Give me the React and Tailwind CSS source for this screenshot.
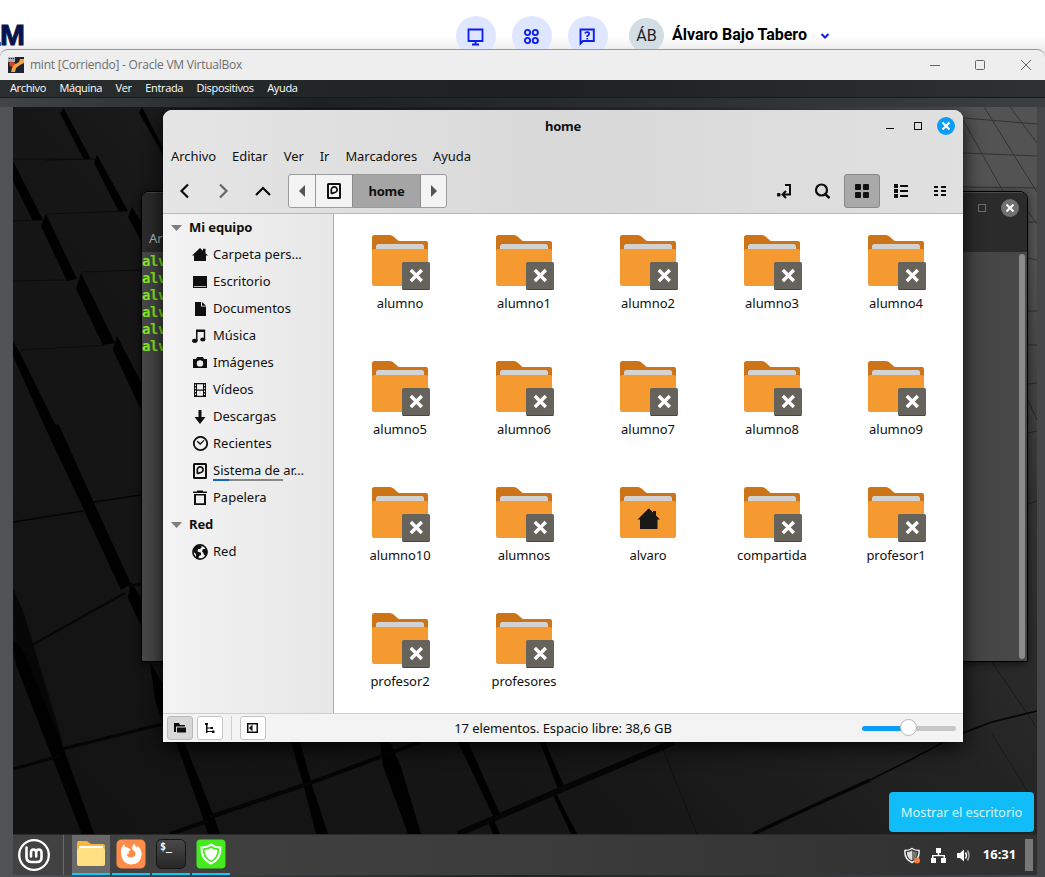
import React from "react";

const INK = "#0d0d0d";

function Wallpaper() {
  return (
    <svg className="absolute inset-0 h-full w-full" viewBox="13 107 1024 727" preserveAspectRatio="none">
      <defs>
        <linearGradient id="wall" x1="0" y1="0.8" x2="1" y2="0.2">
          <stop offset="0" stopColor="#131313" />
          <stop offset="0.35" stopColor="#161616" />
          <stop offset="0.65" stopColor="#232323" />
          <stop offset="0.85" stopColor="#333333" />
          <stop offset="1" stopColor="#535353" />
        </linearGradient>
      </defs>
      <rect x="13" y="107" width="1024" height="727" fill="url(#wall)" />
      <g fill="#010101">
        <path d="M63 107 L91 159 L84 160 L60 113 L64 108Z" />
        <path d="M142 107 L164 150 L164 156 L139 113Z" />
        <path d="M13 161 L43 220 L33 221 L13 181Z" />
        <path d="M97 155 L128 211 L119 212 L94 163Z" />
        <path d="M46 214 L77 279 L67 281 L41 226Z" />
        <path d="M132 207 L142 224 L142 242 L128 217Z" />
        <path d="M81 273 L115 343 L103 345 L76 289Z" />
        <path d="M117 336 L142 384 L142 412 L113 350Z" />
        <path d="M13 341 L20 353 L55 424 L59 425 L94 503 L131 584 L121 590 L84 510 L44 425 L13 356Z" />
        <path d="M131 582 L142 600 L142 628 L128 598Z" />
        <path d="M13 588 L24 614 L60 735 L63 748 L95 834 L84 834 L52 748 L13 655Z" opacity=".25" />
        <path d="M13 588 L24 615 L62 742 L94 834 L81 834 L54 750 L17 660Z" opacity=".3" />
        <path d="M13 588 L23 610 L62 738 L55 752 L13 656Z" opacity=".25" />
        <path d="M13 641 L22 648 L62 745 L94 834 L82 834 L52 757 L16 665Z" />
        <path d="M150 662 L163 684 L163 724 L155 700Z" />
        <path d="M176 742 L184 742 L213 814 L220 834 L208 834 L202 815Z" />
        <path d="M291 742 L300 742 L311 782 L328 834 L316 834 L304 787Z" />
        <path d="M380 742 L390 742 L401 767 L421 834 L408 834 L383 766Z" />
        <path d="M458 742 L468 742 L500 814 L493 816Z" />
        <path d="M540 742 L545 742 L564 786 L558 789Z" />
        <path d="M556 793 L577 834 L571 834 L554 797Z" />
        <path d="M488 821 L494 820 L500 834 L493 834Z" />
      </g>
      <g stroke="#050505" fill="none">
        <path d="M13 522 L83 511 M94 502 L141 495" strokeWidth="1.5" />
        <path d="M45 160 L95 159 M13 159 L84 159 M13 221 L44 220 M46 214 L126 211 M13 281 L68 280 M82 272 L142 270 M21 350 L108 345" stroke="#0b0b0b" />
        <path d="M23 650 L125 593 M128 586 L142 584" strokeWidth="2.5" stroke="#070707" />
        <path d="M62 749 L163 724 M13 769 L60 756" strokeWidth="3" />
        <path d="M210 817 L310 783 L385 755 L420 742 M170 834 L208 821" strokeWidth="4" />
        <path d="M458 834 L560 790 L674 742" strokeWidth="6" />
        <path d="M753 834 L800 812 L870 780 L910 760 L955 736 L992 722 L1037 711" strokeWidth="1.500" />
        <path d="M753 834 L815 805 L870 780" strokeWidth="3.500" />
      </g>
      <g stroke="#000" opacity=".38" fill="none">
        <path d="M963 118 L1037 124 M963 153 L1037 156 M963 187 L1037 188 M1028 222 H1037 M1028 258 L1037 260 M1028 311 H1037 M1028 345 H1037 M1028 384 L1037 383 M1028 433 L1037 431 M1028 504 L1037 501" />
        <path d="M963 120 L1003 191 M984 107 L1037 192 M1010 107 L1037 143 M992 662 L1037 728 M992 734 L1030 795 M660 742 L697 834 M1027 210 L1037 224 M1028 400 L1037 420" />
      </g>
    </svg>
  );
}

const glyphs = {
  home: <path fill="currentColor" d="M8 1 L16 8.500 H14 V14 H2 V8.500 H0Z M11 1.800 H13.500 V6.500 L11 4Z" />,
  desk: (
    <path fill="currentColor" fillRule="evenodd" d="M1 2 H15 V14 H1Z M2 12.200 V13 H14 V12.200Z" />
  ),
  doc: <path fill="currentColor" fillRule="evenodd" d="M3 1 H9 V5.500 H14 V15 H3Z M10 1 L14 4.800 H10Z" />,
  music: (
    <g fill="currentColor">
      <path d="M4 1.500 H13.200 V11.500 H11.800 V4 H5.500 V13 H4Z" />
      <ellipse cx="2.800" cy="12.800" rx="2.800" ry="2.100" />
      <ellipse cx="10.800" cy="11.500" rx="2.600" ry="2.100" />
    </g>
  ),
  camera: (
    <path fill="currentColor" fillRule="evenodd" d="M5 2 H11 L12 4 H15 V13 H1 V4 H4Z M8 5.200 A3.200 3.200 0 1 0 8 11.600 A3.200 3.200 0 1 0 8 5.200Z" />
  ),
  film: (
    <path fill="currentColor" fillRule="evenodd" d="M2 1 H14 V15 H2Z M5 2.200 V7.400 H11 V2.200Z M5 8.700 V13.800 H11 V8.700Z M3 2.400 V4 H4 V2.400Z M3 5.400 V7 H4 V5.400Z M3 8.400 V10 H4 V8.400Z M3 11.400 V13 H4 V11.400Z M12 2.400 V4 H13 V2.400Z M12 5.400 V7 H13 V5.400Z M12 8.400 V10 H13 V8.400Z M12 11.400 V13 H13 V11.400Z" />
  ),
  down: <path fill="currentColor" d="M6.500 1 H9.500 V8 H13.500 L8 15 L2.500 8 H6.500Z" />,
  clock: (
    <g fill="none" stroke="currentColor">
      <circle cx="8.500" cy="7.500" r="6.700" strokeWidth="1.800" />
      <path d="M5.200 5.200 L8.200 8 L12 4.400" strokeWidth="1.300" />
    </g>
  ),
  disk: (
    <g fill="none" stroke="currentColor">
      <rect x="2" y="1" width="12" height="14" rx="0.500" strokeWidth="2" />
      <path d="M5.300 10.800 V6.800 A2.900 2.900 0 1 1 8.200 9.600 L5.300 10.800" strokeWidth="1.700" />
    </g>
  ),
  trash: <path fill="currentColor" fillRule="evenodd" d="M5 0.500 H11 V1.500 H15 V3 H1 V1.500 H5Z M2 4 H14 V15 H2Z M4 5.500 V13.200 H12 V5.500Z" />,
  globe: (
    <g>
      <circle cx="8" cy="8" r="7.100" fill="none" stroke="currentColor" strokeWidth="1.600" />
      <path fill="currentColor" d="M1 6 L4 2 L8 1 L10 3 L8 5 L6 5 L5.500 7.500 L9 8.800 L9 11 L7 12 L6.500 15 L4 14 L4 10 L1.500 8Z M11 5 L14.500 5 L15.500 8 L14 11.500 L12 11 L11.500 9 L10 7.500Z" />
    </g>
  ),
};

function Glyph({ name }) {
  return (
    <svg viewBox="0 0 16 16" className="h-4 w-4 shrink-0">
      {glyphs[name]}
    </svg>
  );
}

function Folder({ home }) {
  return (
    <svg viewBox="0 0 64 56" className="h-14 w-16">
      <rect x="4" y="10" width="56" height="41" rx="2" fill="#a9a9a9" />
      <path d="M4 17 V2.500 Q4 0 6.500 0 H22 Q24 0 25.500 1.500 L30 5.500 Q30.700 6 32 6 H58 Q60 6 60 8 V17Z" fill="#cd7318" />
      <path d="M8 15 V11.500 Q8 9 10.500 9 H53.500 Q56 9 56 11.500 V15Z" fill="#d2d2d2" />
      <path d="M4 16 Q4 14 6 14 H58 Q60 14 60 16 V48 Q60 50 58 50 H6 Q4 50 4 48Z" fill="#f59a31" />
      {home ? (
        <path d="M33 21.500 L44 32.500 H41.500 V42 H24 V32.500 H21.500 L31.500 22.500 Q32.500 21.500 33 21.500 M37 24 H40 V29 L37 26Z" fill="#191919" />
      ) : (
        <g>
          <rect x="34" y="27" width="28" height="28" rx="1.500" fill="#65635c" />
          <path d="M35 54.500 H61" stroke="#474540" />
          <path d="M42.800 35 L53.800 46 M53.800 35 L42.800 46" stroke="#fff" strokeWidth="3.400" />
        </g>
      )}
    </svg>
  );
}

const places = [
  ["home", "Carpeta pers…"],
  ["desk", "Escritorio"],
  ["doc", "Documentos"],
  ["music", "Música"],
  ["camera", "Imágenes"],
  ["film", "Vídeos"],
  ["down", "Descargas"],
  ["clock", "Recientes"],
  ["disk", "Sistema de ar…"],
  ["trash", "Papelera"],
];
const folders = [
  "alumno", "alumno1", "alumno2", "alumno3", "alumno4", "alumno5", "alumno6", "alumno7", "alumno8",
  "alumno9", "alumno10", "alumnos", "alvaro", "compartida", "profesor1", "profesor2", "profesores",
];

function SiteHeader() {
  return (
    <header className="flex h-[49px] w-full shrink-0 overflow-hidden bg-linear-to-b from-white from-75% to-[#eeeeee]">
      <div className="flex w-[456px] items-start pt-[21px]">
        <span className="mt-[21px] h-[4px] w-px bg-[#2a66bb]" />
        <span className="-ml-px font-['Liberation_Sans',sans-serif] text-[30px] leading-[28px] font-bold text-[#07124f] [-webkit-text-stroke:1px_#07124f]">M</span>
      </div>
      <div className="flex gap-4 pt-4">
        <div className="flex h-10 w-10 justify-center rounded-full bg-[#dfe6ff] pt-3">
          <svg className="h-[18px] w-[18px]" viewBox="0 0 18 18" fill="none" stroke="#0b1df0" strokeWidth="1.800">
            <path d="M1.500 1.500 H15.500 V13 H1.500Z M8.500 13 V16 M5 16.500 H12" />
          </svg>
        </div>
        <div className="flex h-10 w-10 justify-center rounded-full bg-[#dfe6ff] pt-3">
          <svg className="h-[18px] w-[18px]" viewBox="0 0 18 18" fill="none" stroke="#0b1df0" strokeWidth="1.900">
            <circle cx="4.500" cy="4.500" r="2.600" /><circle cx="12.300" cy="4.500" r="2.600" />
            <circle cx="4.500" cy="12.500" r="2.600" /><circle cx="12.300" cy="12.500" r="2.600" />
          </svg>
        </div>
        <div className="flex h-10 w-10 justify-center rounded-full bg-[#dfe6ff] pt-3">
          <svg className="h-[18px] w-[18px]" viewBox="0 0 18 18" fill="none" stroke="#0b1df0" strokeWidth="1.900">
            <path d="M1.500 15.500 V1.500 H14.800 V13 H4Z" />
            <path d="M6 5.600 Q6.500 4 8.300 4 Q10.300 4.200 10.200 5.800 Q10 7 8.300 8 V9 M8.300 9.900 V11.500" strokeWidth="1.700" />
          </svg>
        </div>
      </div>
      <div className="mt-[18px] ml-[21px] flex h-[35px] w-[35px] items-center justify-center rounded-full bg-[#d2dde5] font-[Roboto,sans-serif] text-[16px] text-[#222]">
        ÁB
      </div>
      <div className="ml-[8px] pt-[23px] font-[Roboto,sans-serif] text-[16px] leading-[24px] font-bold tracking-[-0.02px] whitespace-nowrap text-black">
        Álvaro Bajo Tabero
      </div>
      <svg className="mt-[33px] ml-[13px] h-[7px] w-[10px]" viewBox="0 0 10 7" fill="none" stroke="#0b1df0" strokeWidth="2">
        <path d="M1.500 1 L5 4.500 L8.500 1" />
      </svg>
    </header>
  );
}

function HostTitle() {
  return (
    <div className="flex h-[31px] shrink-0 items-center rounded-t-lg border-t border-[#999] bg-[#eeeeee] pl-2">
      <svg className="h-4 w-4" viewBox="0 0 16 16">
        <path fill="#1d2330" d="M0 0 H16 V16 H0Z" />
        <path fill="#a8b0bd" d="M0 0 H7 V5 H0Z" />
        <path fill="#222" d="M1 1 H2 V2 H1Z M3 1 H4 V2 H3Z M5 1 H6 V2 H5Z" />
        <path fill="#d4451c" d="M1 6 Q4 3 8 7 L7 11 L2 9Z" />
        <path fill="#f6a33c" d="M6 8 L11 5 L12 2 L16 2 V6 L12 8 L8 11 L7 15 H3 L4 11Z" />
      </svg>
      <span className="ml-[6px] font-['Open_Sans',sans-serif] text-[12px] tracking-[-0.24px] whitespace-nowrap text-[#6d6d6d]">
        mint [Corriendo] - Oracle VM VirtualBox
      </span>
      <svg className="mr-[14px] ml-auto h-[12px] w-[101px]" viewBox="0 0 101 12" fill="none" stroke="#666">
        <path d="M0 6.500 H10 M91 1 L101 11 M101 1 L91 11" />
        <rect x="45.500" y="1.500" width="9" height="9" rx="1" />
      </svg>
    </div>
  );
}

function Terminal() {
  return (
    <div className="absolute top-[84px] left-[128px] flex h-[471px] w-[887px] flex-col overflow-hidden rounded-t-lg border border-black bg-linear-to-r from-[#484848] via-[#333] to-[#484848] shadow-[0_2px_8px_#0008]">
      <div className="flex h-[60px] shrink-0 items-start justify-end gap-[15px] border-t border-[#4a4a4a] bg-[#2b2b2b] pt-[6px] pr-[8px]">
        <span className="mt-[30px] mr-auto ml-[7px] font-['Noto_Sans',sans-serif] text-[13px] leading-[18px] text-[#bbb]">Ar</span>
        <span className="mt-[5px] h-[8px] w-[8px] border border-[#707070]" />
        <span className="flex h-[18px] w-[18px] items-center justify-center rounded-full bg-[#707070]">
          <svg className="h-[8px] w-[8px]" viewBox="0 0 8 8"><path d="M0.500 0.500 L7.500 7.500 M7.500 0.500 L0.500 7.500" stroke="#fff" strokeWidth="2" /></svg>
        </span>
      </div>
      <div className="flex min-h-0 flex-1 justify-between pr-[2px]">
        <div className="pt-px font-['DejaVu_Sans_Mono',monospace] text-[14px] leading-[17px] font-bold tracking-[-0.4px] text-[#82f01e]">
          {[0, 1, 2, 3, 4, 5].map((n) => <div key={n}>alv</div>)}
        </div>
        <div className="mt-[2px] h-[405px] w-[6px] rounded-full bg-[#8b8b8b]" />
      </div>
    </div>
  );
}

function SideHead({ text }) {
  return (
    <div className="flex h-[27px] items-center gap-[7px] pl-[8px] font-bold">
      <svg className="h-[6px] w-[11px]" viewBox="0 0 11 6"><path d="M0 0 H11 L5.500 6Z" fill="#7d7d7d" /></svg>
      <span className="tracking-[-0.1px]">{text}</span>
    </div>
  );
}

function FileManager() {
  return (
    <div className="absolute top-[3px] left-[150px] flex h-[632px] w-[800px] flex-col overflow-hidden rounded-t-[9px] bg-white font-['Noto_Sans',sans-serif] text-[13px] text-[#101010] shadow-[0_5px_20px_#000d]">
      <div className="flex h-[104px] shrink-0 flex-col border-b border-[#b8b8b8] bg-linear-to-r from-[#e5e5e5] via-[#d9d9d9] to-[#e0e0e0]">
        <div className="grid h-[32px] grid-cols-3 items-center">
          <span />
          <span className="pt-[2px] text-center font-bold tracking-[-0.3px]">home</span>
          <div className="flex items-center justify-end pr-[8px]">
            <svg className="h-[18px] w-[73px]" viewBox="0 0 73 18" fill="none">
              <path d="M4 11.500 H12" stroke={INK} />
              <rect x="32.500" y="5.500" width="7" height="7" stroke={INK} />
              <circle cx="64" cy="9" r="9" fill="#0b9cf5" />
              <path d="M60.500 5.500 L67.500 12.500 M67.500 5.500 L60.500 12.500" stroke="#fff" strokeWidth="2" />
            </svg>
          </div>
        </div>
        <div className="flex h-[29px] items-center gap-[16px] pl-[8px] tracking-[-0.06px] whitespace-nowrap">
          {["Archivo", "Editar", "Ver", "Ir", "Marcadores", "Ayuda"].map((m) => <span key={m}>{m}</span>)}
        </div>
        <div className="flex h-[40px] items-center">
          <svg className="ml-[16px] h-[16px] w-[92px]" viewBox="0 0 92 16" fill="none" strokeWidth="2.200">
            <path d="M9 1.500 L2.500 8 L9 14.500" stroke={INK} />
            <path d="M41 1.500 L47.500 8 L41 14.500" stroke="#666" />
            <path d="M77 12 L84 5 L91 12" stroke={INK} />
          </svg>
          <div className="ml-[17px] flex h-[34px] w-[159px] overflow-hidden rounded-[3px] border border-[#9b9b9b] bg-[#f3f3f3]">
            <span className="flex w-[27px] items-center justify-center border-r border-[#9b9b9b]">
              <svg className="h-3 w-[6px]" viewBox="0 0 6 12"><path d="M6 0 V12 L0 6Z" fill="#555" /></svg>
            </span>
            <span className="flex w-[36px] items-center justify-center"><Glyph name="disk" /></span>
            <span className="flex w-[69px] items-center justify-center border-x border-[#8b8b8b] bg-[#a5a5a5] pt-px font-bold tracking-[-0.3px]">home</span>
            <span className="flex flex-1 items-center justify-center">
              <svg className="h-3 w-[6px]" viewBox="0 0 6 12"><path d="M0 0 V12 L6 6Z" fill="#555" /></svg>
            </span>
          </div>
          <svg className="ml-auto h-4 w-[53px]" viewBox="0 0 53 16" fill="none" stroke={INK}>
            <path d="M8 2 H13 V11.500 H6 M9 8 L5.500 11.500 L9 15" strokeWidth="2" />
            <rect x="0" y="10" width="3.500" height="3.500" rx="1" fill={INK} stroke="none" />
            <circle cx="44.500" cy="7" r="5.500" strokeWidth="2.200" />
            <path d="M48 11 L52.500 15" strokeWidth="2.500" />
          </svg>
          <div className="ml-[14px] flex h-[34px] w-[36px] items-center justify-center rounded-[3px] border border-[#888] bg-[#a9a9a9]">
            <div className="grid grid-cols-2 gap-[2px]">
              {[0, 1, 2, 3].map((n) => <span key={n} className="h-[6px] w-[6px] rounded-[1px] bg-[#111]" />)}
            </div>
          </div>
          <svg className="mr-[17px] ml-[14px] h-4 w-[52px]" viewBox="0 0 52 16" fill={INK}>
            <path d="M0 1 H4 V5 H0Z M0 6 H4 V10 H0Z M0 11 H4 V15 H0Z M6 2 H14 V4 H6Z M6 7 H14 V9 H6Z M6 12 H14 V14 H6Z" />
            <path d="M40 3 H44 V5 H40Z M40 7 H44 V9 H40Z M40 11 H44 V13 H40Z M47 3 H52 V5 H47Z M47 7 H52 V9 H47Z M47 11 H52 V13 H47Z" />
          </svg>
        </div>
      </div>
      <div className="flex h-[499px] shrink-0">
        <aside className="w-[171px] shrink-0 border-r border-[#a9a9a9] bg-linear-to-r from-[#f3f3f3] to-[#e8e7e7]">
          <SideHead text="Mi equipo" />
          {places.map(([icon, text]) => (
            <div key={text} className="flex h-[27px] items-center gap-[5px] pl-[29px] whitespace-nowrap">
              <Glyph name={icon} />
              <span className="relative leading-[19px]">
                {text}
                {icon === "disk" && <span className="absolute bottom-[-1px] left-0 h-[2px] w-[70px] bg-linear-to-r from-[#1565c8] from-23% to-[#888] to-23%" />}
              </span>
            </div>
          ))}
          <SideHead text="Red" />
          <div className="flex h-[27px] items-center gap-[5px] pl-[29px]">
            <Glyph name="globe" />
            <span>Red</span>
          </div>
        </aside>
        <main className="grid w-[624px] auto-rows-[126px] grid-cols-5 pt-[21px] pl-[4px]">
          {folders.map((f) => (
            <div key={f} className="flex flex-col items-center">
              <Folder home={f === "alvaro"} />
              <span className="mt-[3px] leading-[18px] tracking-[-0.05px]">{f}</span>
            </div>
          ))}
        </main>
      </div>
      <div className="flex h-[29px] shrink-0 items-center border-t border-[#cfcfcf] bg-[#f3f3f3] pl-[4px]">
        <span className="flex h-[24px] w-[26px] items-center justify-center rounded-[3px] border border-[#bbb] bg-[#d7d7d7]">
          <svg className="h-[10px] w-[12px]" viewBox="0 0 12 10"><path d="M0 0 H5 L6 2 H11 V3.500 H2 V9 H0Z M3 4.500 H12 V9.500 H3Z" fill={INK} /></svg>
        </span>
        <span className="ml-[4px] flex h-[24px] w-[26px] items-center justify-center rounded-[3px] border border-[#c5c5c5] bg-white">
          <svg className="h-[10px] w-[10px]" viewBox="0 0 10 10"><path d="M0 0 H3 V2 H0Z M1 2 H2.500 V10 H1Z M2 4.500 H6 V5.500 H2Z M2 8 H7 V9 H2Z M5.500 4 H8 V6 H5.500Z M7 7.500 H9.500 V10 H7Z" fill={INK} /></svg>
        </span>
        <span className="mx-[8px] h-[24px] w-px bg-[#cfcfcf]" />
        <span className="flex h-[24px] w-[26px] items-center justify-center rounded-[3px] border border-[#c5c5c5] bg-white">
          <svg className="h-[10px] w-[12px]" viewBox="0 0 12 10" fill={INK}><path fillRule="evenodd" d="M0 0 H11 V10 H0Z M1.500 1.500 V8.500 H9.500 V1.500Z" /><path d="M5.500 1.500 V8.500 L2 5Z" /></svg>
        </span>
        <span className="ml-[186px] w-[222px] pt-[2px] text-center tracking-[-0.07px] whitespace-nowrap">17 elementos. Espacio libre: 38,6 GB</span>
        <div className="relative mr-[7px] ml-auto flex h-[18px] w-[94px] items-center">
          <div className="h-[5px] w-full rounded-full bg-linear-to-r from-[#0b9cf5] from-50% to-[#c7c7c7] to-50%" />
          <span className="absolute top-0 left-[38px] h-[17px] w-[17px] rounded-full border border-[#b4b4b4] bg-white" />
        </div>
      </div>
    </div>
  );
}

function Task({ active, children }) {
  return (
    <div className={`flex w-[38px] items-center justify-center border-b-2 border-[#12c8fa] ${active ? "bg-[#696969]" : ""}`}>
      {children}
    </div>
  );
}

function Taskbar() {
  return (
    <div className="relative flex h-[41px] items-stretch border-t border-[#2a2a2a] bg-linear-to-r from-[#424242] via-[#3c3c3c] to-[#303030]">
      <div className="flex w-[51px] shrink-0 items-center border-r border-[#696969] pl-[5px]">
        <svg className="h-8 w-8" viewBox="0 0 32 32" fill="none" stroke="#fff" strokeLinecap="round">
          <circle cx="16" cy="16" r="14.800" strokeWidth="2.300" />
          <path d="M8.500 8.500 V18 Q8.500 23 13.500 23 H19 Q23.500 23 23.500 18.500 V13.500 Q23.500 10.500 20.800 10.500 Q18.200 10.500 18.200 13.500 V17.500 M18.200 13.500 Q18.200 10.500 15.500 10.500 Q13 10.500 13 13.500 V17.500" strokeWidth="2.600" />
        </svg>
      </div>
      <div className="ml-[8px] flex gap-[2px]">
        <Task active>
          <svg className="h-[30px] w-[30px]" viewBox="0 0 30 30">
            <path d="M1 10 V4 Q1 2 3 2 H11 L15 5 H27 Q29 5 29 7 V10Z" fill="#f8b63a" />
            <path d="M3 7 H27 V11 H3Z" fill="#fff" />
            <path d="M1 11 Q1 9 3 9 H27 Q29 9 29 11 V25 Q29 27 27 27 H3 Q1 27 1 25Z" fill="#ffe082" />
          </svg>
        </Task>
        <Task>
          <svg className="h-[30px] w-[30px]" viewBox="0 0 30 30">
            <rect x="0.500" y="0.500" width="29" height="29" rx="5" fill="#ff8d49" />
            <path fill="#fff" d="M5 13 Q5 8 8.500 5 Q8 7 9 8 Q11 7.500 13 9.500 L15 10.500 L12.500 12.500 L13 14.500 L10.500 15.500 Q12 19 16 18.500 Q20 17.500 19.500 14 Q19 12 17 11 Q14.500 8.500 18.500 4.500 Q19 7.500 21 8.500 L21.500 6.500 Q26 11 25.500 16 Q24.500 25 15.500 25.500 Q5.500 25 5 13Z" />
          </svg>
        </Task>
        <Task>
          <svg className="h-[30px] w-[30px]" viewBox="0 0 30 30">
            <defs><linearGradient id="term" x2="0" y2="1"><stop stopColor="#4a4a4a" /><stop offset="1" stopColor="#262626" /></linearGradient></defs>
            <rect x="0.500" y="0.500" width="29" height="29" rx="5" fill="url(#term)" stroke="#151515" />
            <text x="4" y="11" fontSize="10" fontWeight="bold" fill="#fff" fontFamily="DejaVu Sans Mono, monospace">$_</text>
          </svg>
        </Task>
        <Task>
          <svg className="h-[30px] w-[30px]" viewBox="0 0 30 30">
            <rect x="0.500" y="0.500" width="29" height="29" rx="4" fill="#44ea1d" />
            <path d="M15 5.500 Q19 8.500 24.500 8.500 Q25 20 15 24.500 Q5 20 5.500 8.500 Q11 8.500 15 5.500Z" fill="none" stroke="#fff" strokeWidth="2" />
            <path d="M15 9 Q18 11 21.500 11 Q21.500 18 15 21.500 Q8.500 18 8.500 11 Q12 11 15 9Z" fill="#fff" />
          </svg>
        </Task>
      </div>
      <div className="ml-auto flex items-center pr-[4px] text-white">
        <svg className="h-[17px] w-[68px]" viewBox="0 0 68 17">
          <path d="M8 1.500 Q11 3.500 15 3.500 Q16 12 8 15.500 Q0 12 1 3.500 Q5 3.500 8 1.500Z" fill="none" stroke="#f1f1f1" strokeWidth="1.500" />
          <path d="M8 3.500 Q10 5 13 5 Q13.500 11 8 13.500Z" fill="#777" /><path d="M8 3.500 Q6 5 3 5 Q2.500 11 8 13.500Z" fill="#ddd" />
          <circle cx="13" cy="13.500" r="3" fill="#f08043" />
          <path d="M32 1 H37 V6 H35.300 V8 H41 V11 H42 V16 H37 V11 H39.500 V9.300 H29.500 V11 H32 V16 H27 V11 H28 V8 H33.700 V6 H32Z" fill="#fff" />
          <path d="M53 6 H56 L60 2.500 V14.500 L56 11 H53Z" fill="#fff" />
          <path d="M61.500 5.500 Q63.500 8.500 61.500 11.500" fill="none" stroke="#fff" strokeWidth="1.500" />
          <path d="M63.500 3.500 Q66.500 8.500 63.500 13.500" fill="none" stroke="#aaa" strokeWidth="1.500" />
        </svg>
        <span className="ml-[10px] w-[35px] text-center font-['Noto_Sans',sans-serif] text-[13px] font-bold whitespace-nowrap">16:31</span>
        <span className="ml-[8px] h-[32px] w-[8px] bg-[#777]" />
      </div>
      <div className="absolute right-[3px] bottom-[43px] flex h-[40px] w-[145px] items-center justify-center rounded-[4px] bg-[#10bdf8] pt-px font-['Noto_Sans',sans-serif] text-[13px] tracking-[-0.1px] whitespace-nowrap text-[#d9f3ee]">
        Mostrar el escritorio
      </div>
    </div>
  );
}

export default function App() {
  return (
    <div className="flex h-[877px] w-[1045px] flex-col overflow-hidden bg-[#eeeeee]">
      <SiteHeader />
      <HostTitle />
      <div className="flex min-h-0 flex-1 flex-col bg-linear-to-r from-[#505456] via-[#202324] to-[#44484a]">
        <nav className="flex h-[18px] shrink-0 items-center gap-[13.500px] border-b border-[#181a1b] bg-linear-to-r from-[#2c2f30] via-[#1d2021] to-[#2e3132] pl-[10px] font-['Open_Sans',sans-serif] text-[11px] tracking-[-0.35px] text-white">
          {["Archivo", "Máquina", "Ver", "Entrada", "Dispositivos", "Ayuda"].map((m) => <span key={m}>{m}</span>)}
        </nav>
        <div className="h-[9px] shrink-0 bg-linear-to-r from-[#414546] via-[#1e2122] via-30% to-[#3b3f40]" />
        <div className="ml-[13px] flex h-[768px] w-[1024px] shrink-0 flex-col">
          <div className="relative h-[727px] overflow-hidden bg-[#161616]">
            <Wallpaper />
            <Terminal />
            <FileManager />
          </div>
          <Taskbar />
        </div>
      </div>
    </div>
  );
}
